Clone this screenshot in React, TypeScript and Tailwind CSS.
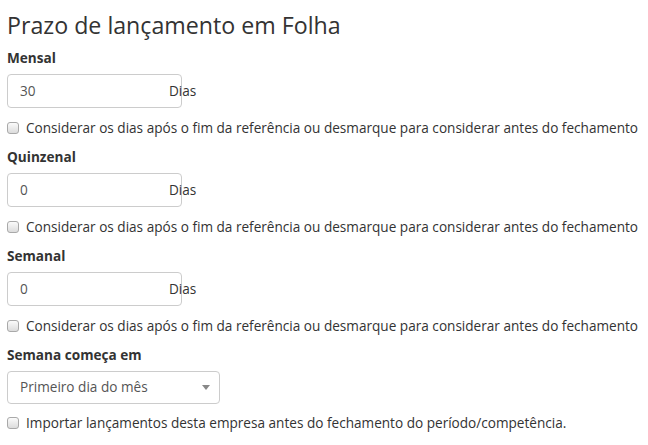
import React from 'react'

const CHECK_TEXT = 'Considerar os dias após o fim da referência ou desmarque para considerar antes do fechamento'

function Checkbox({ label }: { label: string }) {
  return (
    <label className="flex items-center h-[20px] gap-[7px] text-[13.6px] text-[#333]">
      <span className="w-[12px] h-[12px] rounded-[3px] border border-[#a9a9a9] bg-gradient-to-b from-[#fbfbfb] to-[#dcdcdc] shrink-0" />
      <span>{label}</span>
    </label>
  )
}

function DaysField({ label, value }: { label: string; value: string }) {
  return (
    <div className="flex flex-col">
      <div className="h-[18px] font-bold text-[13.6px] text-[#333] leading-[18px]">{label}</div>
      <div className="flex items-center mt-[7px]">
        <div className="w-[175px] h-[34px] border border-[#ccc] rounded-[4px] bg-white flex items-center pl-[12px] text-[13.6px] text-[#555]">
          {value}
        </div>
        <span className="-ml-[13px] text-[13.6px] text-[#333]">Dias</span>
      </div>
      <div className="mt-[10px]">
        <Checkbox label={CHECK_TEXT} />
      </div>
    </div>
  )
}

export default function App() {
  return (
    <div className="w-[648px] h-[445px] bg-white px-[7px] pt-[8px]" style={{ fontFamily: '"Open Sans", sans-serif' }}>
      <h1 className="text-[23.2px] leading-[34px] text-[#333] font-normal">Prazo de lançamento em Folha</h1>
      <div className="flex flex-col gap-[10px] mt-[7px]">
        <DaysField label="Mensal" value="30" />
        <DaysField label="Quinzenal" value="0" />
        <DaysField label="Semanal" value="0" />
        <div className="flex flex-col">
          <div className="h-[18px] font-bold text-[13.6px] text-[#333] leading-[18px]">Semana começa em</div>
          <div className="mt-[7px] w-[213px] h-[33px] border border-[#ccc] rounded-[4px] bg-white flex items-center justify-between pl-[12px] pr-[9px] text-[13.6px] text-[#555]">
            <span>Primeiro dia do mês</span>
            <svg width="8" height="5" viewBox="0 0 8 5"><path d="M0 0h8L4 5z" fill="#888" /></svg>
          </div>
          <div className="mt-[9px]">
            <Checkbox label="Importar lançamentos desta empresa antes do fechamento do período/competência." />
          </div>
        </div>
      </div>
    </div>
  )
}
